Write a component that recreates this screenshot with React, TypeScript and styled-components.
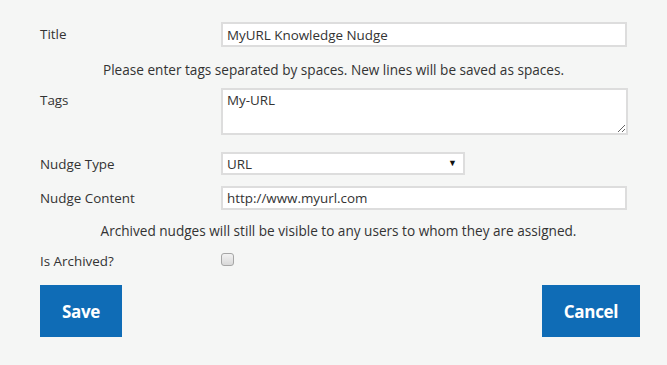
import styled, { createGlobalStyle } from 'styled-components';

const GlobalStyle = createGlobalStyle`
  html, body {
    margin: 0;
    padding: 0;
    background: #f5f6f5;
  }
  body {
    font-family: 'Open Sans', 'Liberation Sans', sans-serif;
    font-size: 13px;
    color: #333;
  }
`;

const Form = styled.form`
  width: 667px;
  height: 365px;
  box-sizing: border-box;
  padding: 22px 0 0 40px;
`;

const Row = styled.div<{ $top?: number }>`
  display: grid;
  grid-template-columns: 181px 1fr;
  align-items: start;
  margin-top: ${(p) => p.$top ?? 0}px;
`;

const Label = styled.label<{ $raise?: boolean }>`
  padding-top: ${(p) => (p.$raise ? 0 : 2)}px;
  margin-top: ${(p) => (p.$raise ? -1 : 0)}px;
  line-height: 20px;
  font-size: 13.4px;
  color: #333;
`;

const Help = styled.p<{ $top: number; $bottom: number; $shift?: number }>`
  width: 587px;
  margin: ${(p) => p.$top}px 0 ${(p) => p.$bottom}px ${(p) => p.$shift ?? 0}px;
  line-height: 20px;
  font-size: 13.6px;
  text-align: center;
  color: #333;
`;

const Field = styled.input<{ $h?: number }>`
  box-sizing: border-box;
  width: 406px;
  height: ${(p) => p.$h ?? 25}px;
  padding: 0 4px;
  border: 2px solid #ddd;
  background: #fff;
  font-family: inherit;
  font-size: 13.4px;
  color: #333;
  outline: none;
`;

const TextArea = styled.textarea`
  box-sizing: border-box;
  width: 407px;
  height: 47px;
  padding: 1px 4px;
  border: 2px solid #ddd;
  background: #fff;
  font-family: inherit;
  font-size: 13.4px;
  line-height: 18px;
  color: #333;
  outline: none;
  resize: both;
`;

const SelectWrap = styled.div`
  position: relative;
  width: 244px;
`;

const Select = styled.select`
  appearance: none;
  box-sizing: border-box;
  width: 244px;
  height: 23px;
  padding: 0 4px;
  border: 2px solid #ddd;
  border-radius: 0;
  background: #fff;
  font-family: inherit;
  font-size: 13.4px;
  color: #333;
  outline: none;
`;

const Arrow = styled.span`
  position: absolute;
  right: 8px;
  top: 4px;
  font-size: 9px;
  line-height: 14px;
  color: #111;
  pointer-events: none;
`;

const Check = styled.input`
  appearance: none;
  box-sizing: border-box;
  width: 13px;
  height: 13px;
  margin: 0;
  border: 1px solid #a6a6a6;
  border-radius: 3px;
  background: linear-gradient(#f2f2f2, #d9d9d9);
`;

const Actions = styled.div`
  display: flex;
  justify-content: space-between;
  margin-top: 14px;
  padding-right: 27px;
`;

const Button = styled.button<{ $w: number }>`
  width: ${(p) => p.$w}px;
  height: 52px;
  border: none;
  background: #0f6cb6;
  color: #fff;
  font-family: 'Open Sans', 'Liberation Sans', sans-serif;
  font-weight: 700;
  font-size: 17px;
  letter-spacing: -0.3px;
  cursor: pointer;
`;

export default function App() {
  return (
    <>
      <GlobalStyle />
      <Form onSubmit={(e) => e.preventDefault()}>
        <Row>
          <Label>Title</Label>
          <Field defaultValue="MyURL Knowledge Nudge" />
        </Row>
        <Help $top={13} $bottom={8}>
          Please enter tags separated by spaces. New lines will be saved as spaces.
        </Help>
        <Row>
          <Label>Tags</Label>
          <TextArea defaultValue="My-URL" />
        </Row>
        <Row $top={17}>
          <Label>Nudge Type</Label>
          <SelectWrap>
            <Select defaultValue="URL">
              <option>URL</option>
              <option>Text</option>
              <option>Video</option>
            </Select>
            <Arrow>▼</Arrow>
          </SelectWrap>
        </Row>
        <Row $top={11}>
          <Label>Nudge Content</Label>
          <Field $h={24} defaultValue="http://www.myurl.com" />
        </Row>
        <Help $top={11} $bottom={11} $shift={5}>
          Archived nudges will still be visible to any users to whom they are assigned.
        </Help>
        <Row>
          <Label $raise>Is Archived?</Label>
          <div>
            <Check type="checkbox" />
          </div>
        </Row>
        <Actions>
          <Button type="submit" $w={82}>Save</Button>
          <Button type="button" $w={98}>Cancel</Button>
        </Actions>
      </Form>
    </>
  );
}
